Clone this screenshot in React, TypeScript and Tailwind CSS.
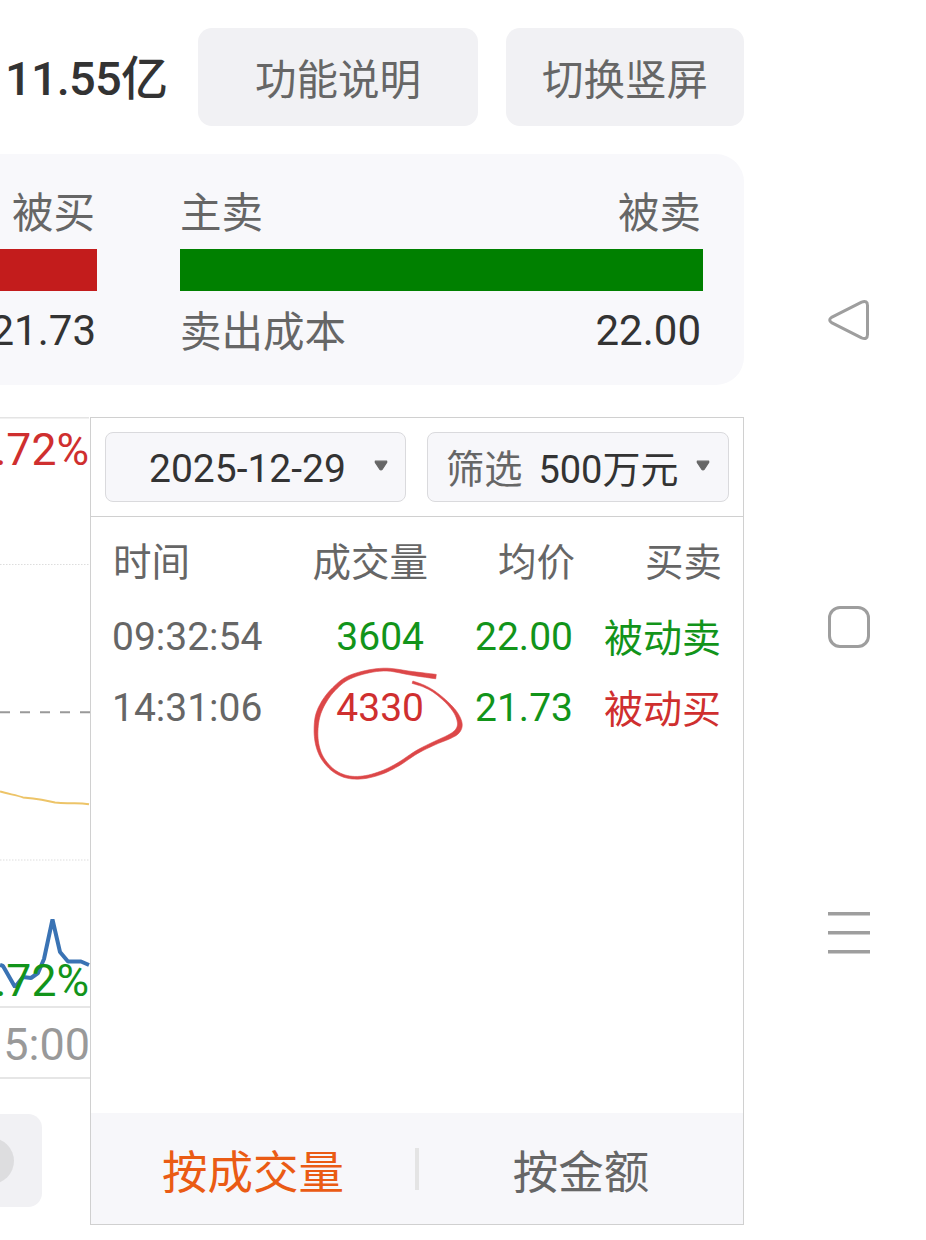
import type { ReactNode } from "react";

type Tone = "up" | "down";

interface Trade {
  time: string;
  volume: string;
  volumeTone: Tone;
  price: string;
  priceTone: Tone;
  side: string;
}

const trades: Trade[] = [
  { time: "09:32:54", volume: "3604", volumeTone: "down", price: "22.00", priceTone: "down", side: "被动卖" },
  { time: "14:31:06", volume: "4330", volumeTone: "up", price: "21.73", priceTone: "down", side: "被动买" },
];

const toneClass: Record<Tone, string> = {
  up: "text-[#cf2f2f]",
  down: "text-[#12941a]",
};

// x, y, pen width along the hand-drawn loop
const loop: [number, number, number][] = [
  [146, 10.6, 4.4], [122, 7.4, 3.8], [97, 3.6, 2.8], [76, 6, 3], [57, 12.5, 3.6], [44, 23, 3.8], [34.5, 35, 4.4],
  [28, 49, 4.6], [26, 65, 3.8], [27.6, 80, 3.2], [33, 93, 2.8], [43.5, 104.5, 2.6], [57, 110.8, 2.6], [73, 111.4, 2.8],
  [91, 106.8, 3.2], [108, 98.5, 3.2], [127, 86, 3.2], [145, 77, 3.4], [160, 70.4, 4.2], [167.5, 65, 5],
  [169.8, 57.5, 4.6], [165.8, 47, 3.2], [156.5, 36, 2.2], [144.5, 26, 1.8], [134, 20.2, 2], [122.5, 16.2, 2.4],
];

function brushPath(points: [number, number, number][]) {
  const samples: number[][] = [];
  for (let i = 0; i < points.length - 1; i++) {
    const p0 = points[Math.max(0, i - 1)];
    const p1 = points[i];
    const p2 = points[i + 1];
    const p3 = points[Math.min(points.length - 1, i + 2)];
    for (let s = 0; s <= 6; s++) {
      if (s === 6 && i < points.length - 2) continue;
      const t = s / 6;
      samples.push([0, 1, 2].map((k) =>
        0.5 * (2 * p1[k] + (p2[k] - p0[k]) * t + (2 * p0[k] - 5 * p1[k] + 4 * p2[k] - p3[k]) * t * t + (3 * p1[k] - p0[k] - 3 * p2[k] + p3[k]) * t * t * t)
      ));
    }
  }
  const left: string[] = [];
  const right: string[] = [];
  samples.forEach(([x, y, w], i) => {
    const a = samples[Math.max(0, i - 1)];
    const b = samples[Math.min(samples.length - 1, i + 1)];
    const len = Math.hypot(b[0] - a[0], b[1] - a[1]) || 1;
    const nx = (-(b[1] - a[1]) / len) * (w / 2);
    const ny = ((b[0] - a[0]) / len) * (w / 2);
    left.push(`${(x + nx).toFixed(2)} ${(y + ny).toFixed(2)}`);
    right.unshift(`${(x - nx).toFixed(2)} ${(y - ny).toFixed(2)}`);
  });
  return `M${left.join("L")}L${right.join("L")}Z`;
}

function Caret() {
  return (
    <svg width="14" height="11" viewBox="0 0 14 11" className="mb-[3px] shrink-0">
      <path d="M1.3 1.2h11.4v1.2L8.4 9Q7 10.6 5.6 9L1.3 2.4z" fill="#666" stroke="#666" strokeWidth="1.2" strokeLinejoin="round" />
    </svg>
  );
}

function Select({ children }: { children: ReactNode }) {
  return (
    <button className="flex h-[70px] items-center rounded-lg border border-[#dadadd] bg-[#f7f7fa] text-[39px] text-[#333]">
      {children}
    </button>
  );
}

function Header() {
  return (
    <header className="flex h-[98px] items-center">
      <div className="w-[198px] pl-[5px] pt-[5px] text-[47px] font-medium tracking-[-0.8px] text-[#333]">11.55亿</div>
      <button className="h-full w-[280px] rounded-[14px] bg-[#f1f1f4] pt-[9px] text-[41.5px] text-[#666]">功能说明</button>
      <button className="ml-7 h-full w-[238px] rounded-[14px] bg-[#f1f1f4] pt-[9px] text-[41.5px] text-[#666]">切换竖屏</button>
    </header>
  );
}

function CostCard() {
  return (
    <section className="mt-7 flex h-[231px] rounded-r-[28px] bg-[#f8f8fb] pt-[30px] text-[41.5px] leading-[60px] text-[#666]">
      <div className="w-[97px]">
        <div className="flex h-[60px] justify-end pr-[2px]">被买</div>
        <div className="mt-[5px] h-[42px] bg-[#c31c1c]" />
        <div className="mt-[10px] flex h-[60px] justify-end pr-px text-[42px] text-[#333]">21.73</div>
      </div>
      <div className="ml-[83px] w-[523px]">
        <div className="flex h-[60px] justify-between pr-[2px]">
          <span>主卖</span>
          <span>被卖</span>
        </div>
        <div className="mt-[5px] h-[42px] bg-[#008000]" />
        <div className="mt-[10px] flex h-[60px] justify-between pr-[2px]">
          <span className="pt-[2px]">卖出成本</span>
          <span className="text-[42px] text-[#333]">22.00</span>
        </div>
      </div>
    </section>
  );
}

function ChartEdge() {
  return (
    <aside className="w-[90px] shrink-0 overflow-hidden">
      <div className="relative h-[589px]">
        <svg width="90" height="589" viewBox="0 0 90 589" fill="none">
          <path d="M0 .5h89" stroke="#e4e4e4" strokeWidth="2" />
          <path d="M0 147.5h89M0 443h89" stroke="#ddd" strokeDasharray="1.5 1.5" />
          <path d="M0 295.3h90" stroke="#999" strokeWidth="2" strokeDasharray="10 10" />
          <path d="M0 374.5C8 377 16 378 23 380.4C34 381.5 46 383 55 385.5Q62 386.5 72 386.2Q82 386 89 387.3" stroke="#edc468" strokeWidth="2" />
          <path d="M0 548L3 549L15 570L23 560L31 561L38 556L44 542L52.5 502.5L60 535L68 544.5H81L89 548" stroke="#3a73b4" strokeWidth="4" strokeLinejoin="bevel" />
        </svg>
        <span className="absolute right-px top-[5px] text-[44.5px] leading-[56px] text-[#cf2f2f]">.72%</span>
        <span className="absolute right-px -bottom-[3px] text-[44.5px] leading-[56px] text-[#12941a]">.72%</span>
      </div>
      <div className="flex h-[73px] items-center justify-end border-y-2 border-[#e6e6e6] pt-[5px] text-[45px] text-[#999]">5:00</div>
      <div className="mt-[35px] flex h-[93px] w-[42px] items-center overflow-hidden rounded-r-[14px] bg-[#f1f1f4]">
        <div className="-ml-8 size-[46px] shrink-0 rounded-full bg-[#dddddf]" />
      </div>
    </aside>
  );
}

function TradePanel() {
  return (
    <section className="flex h-[808px] w-[654px] flex-col border border-[#d0d0d0] text-[39px]">
      <div className="grid h-[99px] grid-cols-[301px_302px] content-center gap-[21px] border-b border-[#d0d0d0] pl-3.5">
        <Select>
          <span className="ml-[43px] w-[225px] pt-[5px] text-left">2025-12-29</span>
          <Caret />
        </Select>
        <Select>
          <span className="ml-[18px] pt-[7px] text-[38.2px] text-[#666]">筛选</span>
          <span className="ml-4 mr-[18px] whitespace-nowrap pt-[6px] text-[38px]">500万元</span>
          <Caret />
        </Select>
      </div>
      <div className="relative flex-1 pt-[9px] leading-[70px] text-[#666]">
        <div className="grid h-[76px] grid-cols-[170px_145px_147px_147px] pl-[22px] pt-[2px] text-[38.5px]">
          <span>时间</span>
          <span className="text-right">成交量</span>
          <span className="text-right">均价</span>
          <span className="text-right">买卖</span>
        </div>
        {trades.map((trade) => (
          <div key={trade.time} className="grid h-[71px] grid-cols-[170px_142px_149px_148px] pl-[21px]">
            <span>{trade.time}</span>
            <span className={`text-right ${toneClass[trade.volumeTone]}`}>{trade.volume}</span>
            <span className={`text-right ${toneClass[trade.priceTone]}`}>{trade.price}</span>
            <span className={`pt-[2px] text-right ${toneClass[trade.volumeTone]}`}>{trade.side}</span>
          </div>
        ))}
        <svg width="190" height="120" viewBox="0 0 190 120" className="absolute left-[199px] top-[149px]">
          <path d={brushPath(loop)} fill="#dc4748" stroke="#dc4748" strokeWidth=".6" strokeLinejoin="round" />
        </svg>
      </div>
      <nav className="flex h-[111px] items-center bg-[#f7f7fa] text-[45.5px]">
        <button className="w-[324px] pt-[11px] text-[#ea5b14]">按成交量</button>
        <div className="h-[42px] w-1 bg-[#e4e4e4]" />
        <button className="w-[324px] pt-[11px] text-[#666]">按金额</button>
      </nav>
    </section>
  );
}

function SystemNav() {
  return (
    <nav className="flex flex-1 flex-col items-center pl-7 pt-[299px] text-[#9e9e9e]">
      <svg width="42" height="42" viewBox="0 0 42 42" fill="none" stroke="currentColor" strokeWidth="3">
        <path d="M3.5 18.4L33.6 3.1Q39.5 1 39.5 6.5V35.5Q39.5 41 33.6 38.9L3.5 23.6Q-.1 21 3.5 18.4Z" strokeLinejoin="round" />
      </svg>
      <svg width="42" height="42" viewBox="0 0 42 42" fill="none" stroke="currentColor" strokeWidth="3" className="mt-[265px]">
        <rect x="1.5" y="1.5" width="39" height="39" rx="10.5" />
      </svg>
      <svg width="42" height="44" viewBox="0 0 42 44" fill="none" stroke="currentColor" strokeWidth="3.6" className="mt-[263px]">
        <path d="M0 2.8h42M0 21.8h42M0 40.8h42" />
      </svg>
    </nav>
  );
}

export default function App() {
  return (
    <div className="flex h-[1240px] w-[926px] overflow-hidden bg-white font-[Roboto,'Noto_Sans_CJK_SC',sans-serif]">
      <main className="w-[744px] shrink-0 pt-7">
        <Header />
        <CostCard />
        <div className="mt-8 flex">
          <ChartEdge />
          <TradePanel />
        </div>
      </main>
      <SystemNav />
    </div>
  );
}
